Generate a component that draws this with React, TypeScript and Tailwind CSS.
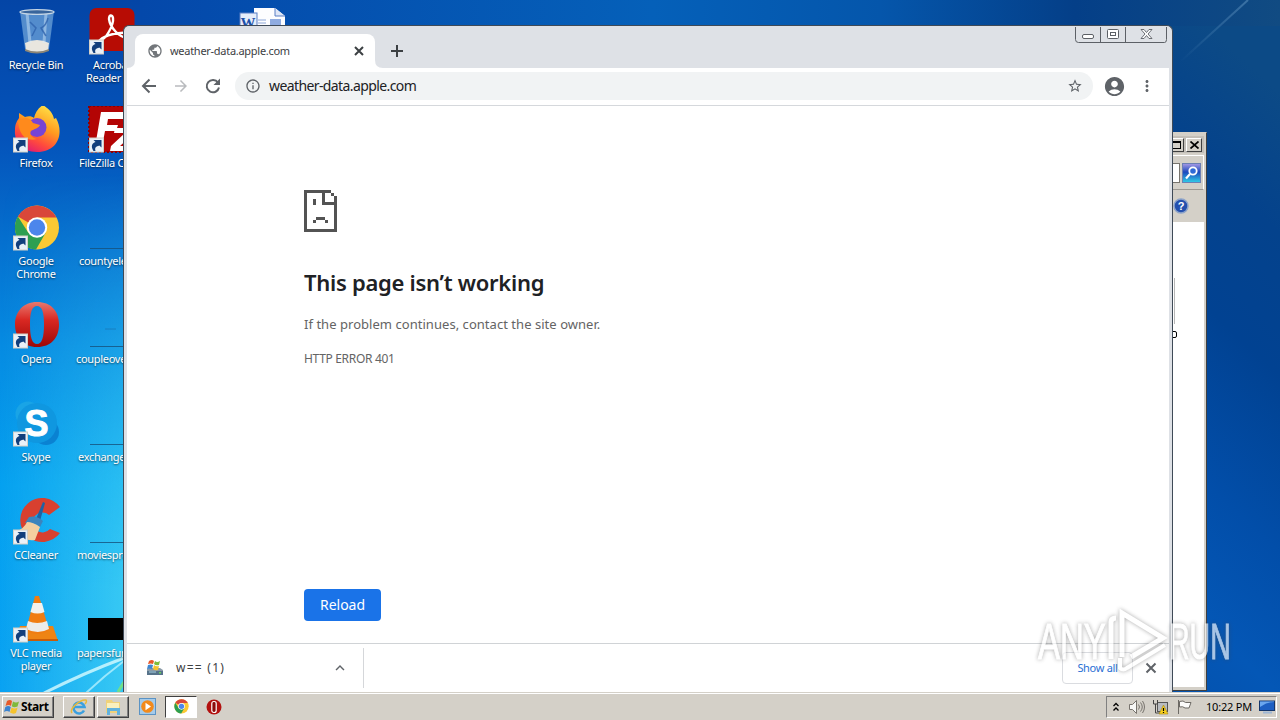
import type { FC, ReactNode } from 'react';
import {
  MdAccountCircle,
  MdArrowForward,
  MdExpandLess,
  MdInfoOutline,
  MdMoreVert,
  MdPublic,
  MdStarBorder,
} from 'react-icons/md';

interface DesktopItem {
  lines: string[];
  icon: ReactNode;
  shortcut?: boolean;
  // label alignment, centred unless given
  align?: string;
}

/* ---------- Wallpaper ---------- */

const Wallpaper: FC = () => (
  <svg className="absolute inset-0" width="1280" height="692" preserveAspectRatio="none">
    <defs>
      <linearGradient id="sky" x1="0" y1="0" x2="0" y2="1">
        <stop offset="0" stopColor="#0445a6" />
        <stop offset="0.2" stopColor="#0453ba" />
        <stop offset="0.35" stopColor="#0570cf" />
        <stop offset="0.5" stopColor="#068be2" />
        <stop offset="0.7" stopColor="#05a1f0" />
        <stop offset="1" stopColor="#0aa2f2" />
      </linearGradient>
      <linearGradient id="top" x1="0" y1="0" x2="1" y2="0">
        <stop offset="0" stopColor="#0448aa" />
        <stop offset="0.45" stopColor="#0560b9" />
        <stop offset="0.65" stopColor="#0556ab" />
        <stop offset="0.82" stopColor="#043f88" />
        <stop offset="1" stopColor="#114b82" />
      </linearGradient>
      <linearGradient id="glow" x1="0" y1="0" x2="1" y2="0">
        <stop offset="0" stopColor="#4fdcf5" stopOpacity="0" />
        <stop offset="1" stopColor="#4fdcf5" stopOpacity="0.75" />
      </linearGradient>
      <linearGradient id="glowMask" x1="0" y1="0" x2="0" y2="1">
        <stop offset="0.25" stopColor="#000" />
        <stop offset="0.85" stopColor="#fff" />
      </linearGradient>
      <mask id="fade">
        <rect width="140" height="692" fill="url(#glowMask)" />
      </mask>
      <linearGradient id="right" x1="0.6" y1="0" x2="0.35" y2="1">
        <stop offset="0" stopColor="#0c4a86" />
        <stop offset="0.2" stopColor="#04428c" />
        <stop offset="0.4" stopColor="#014292" />
        <stop offset="0.65" stopColor="#024ea9" />
        <stop offset="0.85" stopColor="#0457b6" />
        <stop offset="1" stopColor="#0452ae" />
      </linearGradient>
      <linearGradient id="ray" gradientUnits="userSpaceOnUse" x1="1180" y1="62" x2="1248" y2="0">
        <stop offset="0" stopColor="#5f93bf" stopOpacity="0" />
        <stop offset="1" stopColor="#5f93bf" stopOpacity="0.55" />
      </linearGradient>
    </defs>
    <rect width="400" height="692" fill="url(#sky)" />
    <rect width="140" height="692" fill="url(#glow)" mask="url(#fade)" />
    <rect x="140" width="1140" height="60" fill="url(#top)" />
    <rect x="1100" y="26" width="180" height="666" fill="url(#right)" />
    <path d="M1180 62L1248 0" stroke="url(#ray)" strokeWidth="2" />
    <path d="M44 693Q84 673 124 658" stroke="#d8fbff" strokeWidth="3" fill="none" opacity="0.8" />
    <path d="M86 693Q104 676 124 661" stroke="#c6f6ff" strokeWidth="2" fill="none" opacity="0.7" />
    <path d="M118 692L124 682" stroke="#6fe08c" strokeWidth="3" />
  </svg>
);

/* ---------- Desktop icons ---------- */

const RecycleBinIcon = () => (
  <>
    <path d="M8 3h34l-5 38q-12 7-24 0z" fill="#6ea3d8" opacity="0.75" />
    <path d="M13 35q12-6 24 0l-1 7q-11 5-22 0z" fill="#e9e6df" />
    <path d="M15 5l3 30M34 5l-2 30" stroke="#d6ebfb" strokeWidth="3" opacity="0.45" />
    <path d="M18 14l6 6-4 8M36 10q-2 8-7 10l5 8" stroke="#2f63ad" strokeWidth="1.500" fill="none" opacity="0.8" />
    <path d="M13 41q12 5 24 0v2q-12 5-24 0z" fill="#8b8577" />
    <ellipse cx="25" cy="4" rx="17" ry="2.400" fill="#39659c" stroke="#c5d6e6" strokeWidth="1.300" />
  </>
);

const AcrobatIcon = () => (
  <>
    <rect x="1.500" y="0" width="45" height="43" rx="7" fill="#b70c04" />
    <path
      d="M12 32c5 1 14-15 13-22-1-4-4-3-4 1 1 8 10 19 19 19 4 0 3-4-1-5-8-1-22 2-27 7z"
      fill="none"
      stroke="#fff"
      strokeWidth="2.400"
    />
  </>
);

const FirefoxIcon = () => (
  <>
    <defs>
      <linearGradient id="ff" x1="0.8" y1="0" x2="0.3" y2="1">
        <stop offset="0" stopColor="#ffe84a" />
        <stop offset="0.45" stopColor="#ff9a1f" />
        <stop offset="0.75" stopColor="#ff4a3d" />
        <stop offset="1" stopColor="#e21b72" />
      </linearGradient>
    </defs>
    <path
      d="M31-1c6 4 10 8 11 14l2-1c8 14 3 34-19 34C9 46 2 35 3 24c0-6 2-9 4-12V7l6 4c3-1 7-1 9 1 1-5 4-10 9-13z"
      fill="url(#ff)"
    />
    <circle cx="25" cy="21.500" r="9.500" fill="#7844d4" />
    <path d="M6 15c6-5 12-3 15 2l7 2c-1 3-6 4-9 6-2 3 1 7 6 8C13 36 7 28 6 15z" fill="#ff8a1c" />
  </>
);

const FileZillaIcon = () => (
  <>
    <rect x="1" y="0" width="47" height="46" fill="#b30404" stroke="#8d0000" strokeWidth="2" strokeDasharray="2 2" />
    <path d="M13 6h24l-2 7H20l-1 6h11l-2 6H17l-3 16H7zM27 22h20l-2 6-13 12h13v5H22l1-5 14-13H26z" fill="#fff" />
  </>
);

const ChromeIcon: FC = () => (
  <>
    <circle cx="25" cy="23.500" r="22" fill="#fbc934" />
    <path d="M25 23.500L5.900 12.500A22 22 0 0 1 44.500 13.500H25z" fill="#d9473a" />
    <path d="M5.900 12.500A22 22 0 0 0 24 45.500L33.500 29 25 23.500 16.500 29z" fill="#2d9f51" />
    <circle cx="25" cy="23.500" r="10.200" fill="#fff" />
    <circle cx="25" cy="23.500" r="8.200" fill="#4c86ec" />
  </>
);

const OperaIcon = () => (
  <>
    <defs>
      <linearGradient id="op" x1="0" y1="0" x2="0" y2="1">
        <stop offset="0" stopColor="#e8796f" />
        <stop offset="0.4" stopColor="#d92822" />
        <stop offset="1" stopColor="#9d0807" />
      </linearGradient>
    </defs>
    <path
      fillRule="evenodd"
      d="M25 0C11 0 3 10 3 22.500S11 45 25 45s22-9 22-22.500S39 0 25 0zm0 4c5 0 7 6 7 18.500S30 42 25 42s-7-7-7-19.500S20 4 25 4z"
      fill="url(#op)"
    />
  </>
);

const SkypeIcon = () => (
  <>
    <circle cx="16" cy="14" r="12.500" fill="#19a4e6" />
    <circle cx="34" cy="32" r="13" fill="#0a82d2" />
    <circle cx="25" cy="23" r="20" fill="#0f97e0" />
    <text x="24.500" y="35.500" textAnchor="middle" fontSize="36" fontWeight="700" fill="#fff" stroke="#fff" fontFamily="Liberation Sans, sans-serif">
      S
    </text>
  </>
);

const CCleanerIcon = () => (
  <>
    <path d="M48 9A22 22 0 1 0 48 35l-10-4A10 10 0 1 1 37 17z" fill="#d8402f" />
    <path d="M31 4l2 1-5 18-4-2z" fill="#1e62a4" />
    <path d="M17 19q8-2 14 4l-3 6q-7-5-15-4z" fill="#3c84bd" />
    <path d="M15 24q6 0 13 5l-5 13q-10 2-20-8 9-3 12-10z" fill="#f4cfa0" />
  </>
);

const VlcIcon = () => (
  <>
    <path d="M8 30h33l5 15H3z" fill="#ee8414" />
    <path d="M23 0h4l10 34q-12 8-23 0z" fill="#f07d12" />
    <path d="M21 7h9l2.500 9q-7 3-14 0z" fill="#f2f2ee" />
    <path d="M16 25q9 4 19 0l2 8q-11 6-23 0z" fill="#ececea" />
    <path d="M4 43h42v2H4z" fill="#c85c08" />
  </>
);

const WordDocIcon = () => (
  <>
    <path d="M16 0h21l10 8v40H16z" fill="#fdfdff" />
    <path d="M37 0v8h10" fill="#dfe6f6" stroke="#5b7fc4" />
    <path d="M20 12h8M20 15h8" stroke="#8ea8d8" />
    <rect x="32" y="11" width="11" height="6" fill="#8fabe0" />
    <rect x="2" y="5" width="17" height="16" fill="#e6edfa" stroke="#5b7fc4" />
    <text x="2.500" y="20" fontSize="15" fontWeight="700" fill="#1d50a8" fontFamily="Liberation Serif, serif">
      W
    </text>
  </>
);

const Thumb: FC<{ smudge?: boolean }> = ({ smudge }) => (
  <>
    <path d="M2 44.500h46" stroke="#16527d" opacity="0.8" />
    {smudge && <path d="M17 27h11" stroke="#1b5f98" opacity="0.45" />}
  </>
);

const ShortcutArrow = () => (
  <g transform="translate(1 31.500)">
    <rect x="0.500" y="0.500" width="14" height="14" fill="#e9f1f8" stroke="#d4cfc6" />
    <path d="M4.500 13.500C1.500 9 3 5.500 6.500 4.500L4.500 2.500H12.500V10L10.300 8C7 9 5.500 10 6.500 13.500z" fill="#123f7c" />
  </g>
);

const DesktopIcon: FC<{ item: DesktopItem }> = ({ item }) => (
  <div className="h-[98px] pt-2 flex flex-col items-center">
    <svg width="48" height="48" viewBox="0 0 48 48" className="shrink-0">
      {item.icon}
      {item.shortcut && <ShortcutArrow />}
    </svg>
    <div
      className={`mt-[2px] w-full whitespace-nowrap text-[11px] leading-[13px] tracking-[-0.3px] text-white [text-shadow:0_1px_2px_rgba(0,0,0,0.6)] ${
        item.align ?? 'text-center'
      }`}
    >
      {item.lines.map((line) => (
        <div key={line}>{line}</div>
      ))}
    </div>
  </div>
);

const firstColumn: DesktopItem[] = [
  { lines: ['Recycle Bin'], icon: <RecycleBinIcon /> },
  { lines: ['Firefox'], icon: <FirefoxIcon />, shortcut: true },
  { lines: ['Google', 'Chrome'], icon: <ChromeIcon />, shortcut: true },
  { lines: ['Opera'], icon: <OperaIcon />, shortcut: true },
  { lines: ['Skype'], icon: <SkypeIcon />, shortcut: true },
  { lines: ['CCleaner'], icon: <CCleanerIcon />, shortcut: true },
  { lines: ['VLC media', 'player'], icon: <VlcIcon />, shortcut: true },
];

const secondColumn: DesktopItem[] = [
  { lines: ['Acrobat', 'Reader DC'], icon: <AcrobatIcon />, shortcut: true },
  { lines: ['FileZilla C'], icon: <FileZillaIcon />, shortcut: true, align: 'pl-[7px]' },
  { lines: ['countyele'], icon: <Thumb />, align: 'pl-[7px]' },
  { lines: ['coupleove'], icon: <Thumb smudge />, align: 'pl-1' },
  { lines: ['exchange'], icon: <Thumb />, align: 'pl-1.5' },
  { lines: ['moviespro'], icon: <Thumb />, align: 'pl-[5px]' },
  { lines: ['papersfun'], icon: <rect y="22" width="48" height="22" fill="#000" />, align: 'pl-[5px]' },
];

/* ---------- Explorer window, mostly hidden by the browser ---------- */

const ExplorerWindow: FC = () => (
  <div className="absolute left-[1100px] top-[132px] flex h-[559px] w-[107px] flex-col border border-t-[#d4d0c8] border-l-[#d4d0c8] border-r-[#404040] border-b-[#404040] bg-[#d4d0c8] p-[2px] pt-[3px]">
    <div className="flex h-[17px] items-center justify-end gap-[2px] bg-[#c3bfb8] pr-[2px]">
      <div className="flex h-[14px] w-4 items-center justify-center border border-t-white border-l-white border-r-[#404040] border-b-[#404040] bg-[#d4d0c8]">
        <div className="h-2 w-[9px] border border-t-2 border-black" />
      </div>
      <div className="flex h-[14px] w-4 items-center justify-center border border-t-white border-l-white border-r-[#404040] border-b-[#404040] bg-[#d4d0c8]">
        <svg width="9" height="8" viewBox="0 0 9 8" stroke="#000" strokeWidth="1.700">
          <path d="M0.500 0.500l8 7M8.500 0.500l-8 7" />
        </svg>
      </div>
    </div>
    <div className="mt-0.5 flex h-[35px] items-center justify-end gap-[2px] border border-t-white border-r-white border-b-[#9d9992] border-l-[#9d9992] pr-[2px]">
      <div className="h-5 w-20 border border-[#77746d] bg-white" />
      <svg width="20" height="20" viewBox="0 0 19 20">
        <defs>
          <linearGradient id="find" x1="0" y1="0" x2="0" y2="1">
            <stop offset="0" stopColor="#a99be6" />
            <stop offset="0.45" stopColor="#1c49bd" />
            <stop offset="1" stopColor="#31cfe8" />
          </linearGradient>
        </defs>
        <rect x="0.500" y="0.500" width="18" height="19" fill="url(#find)" stroke="#6c7fb4" />
        <circle cx="11" cy="8" r="3.700" fill="#2f6ad6" stroke="#fff" strokeWidth="1.800" />
        <path d="M8 11l-4 4.500" stroke="#fff" strokeWidth="2.200" />
      </svg>
    </div>
    <div className="flex h-8 items-center justify-end pr-[15px]">
      <svg width="16" height="16" viewBox="0 0 16 16">
        <circle cx="8" cy="8" r="7" fill="#2450ae" stroke="#8da3c9" strokeWidth="1.500" />
        <text x="8" y="12" textAnchor="middle" fontSize="11" fontWeight="700" fill="#fff" fontFamily="Liberation Sans, sans-serif">
          ?
        </text>
      </svg>
    </div>
    <div className="flex-1 bg-white pt-[56px]">
      <div className="ml-[71px] h-[46px] w-px bg-[#b8b8b8]" />
      <div className="ml-[67px] mt-[7px] h-[7px] w-[7px] rounded-[2px] border border-black" />
    </div>
    <div className="h-px bg-[#d4d0c8]" />
  </div>
);

/* ---------- Browser window ---------- */

const LineIcon: FC<{ d: string; className: string }> = ({ d, className }) => (
  <svg width="18" height="18" viewBox="0 0 18 18" fill="none" stroke="currentColor" strokeWidth="2" className={className}>
    <path d={d} />
  </svg>
);

const closePath = 'M4.500 4.500l9 9M13.500 4.500l-9 9';

const CaptionButtons: FC = () => (
  <svg width="94" height="18" viewBox="0 0 94 18" fill="none" stroke="#5c6066" className="mr-px">
    <g transform="translate(0 -0.500)">
      <path d="M1.500 0v13q0 3 3 3h86q2 0 2-3V0M26.500 0v16M51.500 0v16" />
      <rect x="8.500" y="8" width="11" height="4" rx="1.500" fill="#fff" />
      <rect x="33.500" y="3" width="11" height="9" rx="1" fill="#fff" />
      <rect x="36.500" y="6" width="5" height="3" />
      <path
        d="M67 3h3l2.500 3 2.500-3h3l-4 4.500 4 4.500h-3l-2.500-3-2.500 3h-3l4-4.500z"
        fill="#fff"
        strokeWidth="0.900"
      />
    </g>
  </svg>
);

const TabStrip: FC = () => (
  <div className="flex h-[41px] items-start justify-between bg-[#dee1e6]">
    <div className="flex h-full items-end">
      <svg width="8" height="8" className="text-white">
        <path d="M8 0v8H0q8 0 8-8z" fill="currentColor" />
      </svg>
      <div className="flex h-[34px] w-[240px] items-center rounded-t-lg bg-white pl-3 pr-[7px]">
        <MdPublic className="h-4 w-4 text-[#72767a]" />
        <span className="ml-[7px] text-[11px] tracking-[-0.28px] text-[#3c4043]">weather-data.apple.com</span>
        <LineIcon d="M5 5l8 8M13 5l-8 8" className="ml-auto text-[#3c4043]" />
      </div>
      <svg width="8" height="8" className="text-white">
        <path d="M0 0v8h8q-8 0-8-8z" fill="currentColor" />
      </svg>
      <LineIcon d="M9 3v12M3 9h12" className="mb-2 ml-[5px] text-[#3c4043]" />
    </div>
    <CaptionButtons />
  </div>
);

const Toolbar: FC = () => (
  <div className="flex h-[38px] items-center border-b border-[#d5d8dc] bg-white pb-px pl-[13px] text-[#5f6368]">
    <LineIcon d="M16 9H3.500M9.500 2.500L3 9l6.500 6.500" className="" />
    <MdArrowForward className="ml-[14px] h-[18px] w-[18px] text-[#b9bbbe]" />
    <svg width="20" height="20" viewBox="0 0 20 20" className="ml-[13px]">
      <path d="M15 6.500A6.200 6.200 0 1 0 16 11.500" fill="none" stroke="currentColor" strokeWidth="2" />
      <path d="M17 2.500v6.500h-6.500z" fill="currentColor" />
    </svg>
    <div className="ml-[12px] flex h-7 w-[858px] items-center rounded-full bg-[#f1f3f4] pl-[10px] pr-[10px]">
      <MdInfoOutline className="h-4 w-4" />
      <span className="ml-2 pb-px text-[14px] tracking-[-0.6px] text-[#202124]">weather-data.apple.com</span>
      <MdStarBorder className="ml-auto h-4 w-4" />
    </div>
    <MdAccountCircle className="ml-[10px] h-[23px] w-[23px]" />
    <MdMoreVert className="ml-[12px] h-[18px] w-[18px]" />
  </div>
);

// 11x14 grid, every cell drawn three pixels wide
const SadPage: FC = () => (
  <svg width="33" height="42" viewBox="0 0 11 14" shapeRendering="crispEdges" fill="#535353">
    <path d="M0 0h9v1H7v3h4v1H6V1H1v12h9V5h1v9H0z" />
    <path d="M9 1h1v1H9zM10 2h1v3h-1zM3 3h1v2H3zM4 9h3v1H4zM3 10h1v1H3zM7 10h1v1H7z" />
  </svg>
);

const ErrorPage: FC = () => (
  <div className="flex flex-1 flex-col items-start pl-[177px] pt-[84px]">
    <SadPage />
    <h1 className="mt-[34px] text-[22px] font-semibold leading-8 tracking-[-0.28px] text-[#202124]">
      This page isn’t working
    </h1>
    <p className="mt-4 text-[13px] leading-5 tracking-[0.04px] text-[#646464]">
      If the problem continues, contact the site owner.
    </p>
    <p className="mt-[15px] text-[12px] leading-5 tracking-[-0.32px] text-[#646464]">HTTP ERROR 401</p>
    <button className="mt-[220px] h-8 w-[77px] rounded bg-[#1a73e8] pb-0.5 text-[14px] text-white">Reload</button>
  </div>
);

const InstallerIcon: FC = () => (
  <svg width="18" height="18" viewBox="0 0 18 18" className="ml-px">
    <path d="M1 10l2-1h11l3 2v5H1z" fill="#8b9ba8" />
    <path d="M1 12h16v4H1z" fill="#57738a" />
    <path d="M3 13h7" stroke="#a9d3e3" />
    <rect x="13" y="13" width="2" height="1.500" fill="#6cd35b" />
    <path d="M3 2q3-2 5 0L7 5Q5 4 2 5z" fill="#e8572a" />
    <path d="M9 2q2 2 5 0l-1 4Q10 7 8 5z" fill="#7ebc3c" />
    <path d="M2 6q3-1 5 0l-1 4q-2-1-5 0z" fill="#3e86d0" />
    <path d="M8 6q2 2 5 1l-1 4q-3 1-5-1z" fill="#f6c22e" />
  </svg>
);

const DownloadBar: FC = () => (
  <div className="flex h-[49px] items-center border-t border-[#d0d3d6] bg-white">
    <div className="flex h-10 w-[237px] items-center border-r border-[#d5d7da] pl-[18px]">
      <InstallerIcon />
      <span className="ml-3 text-[12px] tracking-[1.25px] text-[#3c4043]">w== (1)</span>
      <MdExpandLess className="ml-auto mr-[14px] h-[18px] w-[18px] text-[#5f6368]" />
    </div>
    <div className="ml-auto flex items-center">
      <button className="h-8 w-[71px] rounded border border-[#dadce0] text-[11px] tracking-[-0.3px] text-[#2a6fd4]">
        Show all
      </button>
      <LineIcon d={closePath} className="ml-[9px] mr-[9px] text-[#5f6368]" />
    </div>
  </div>
);

const BrowserWindow: FC = () => (
  <div className="absolute left-[123px] top-[25px] flex h-[667px] w-[1050px] flex-col overflow-hidden rounded-t-md border border-b-0 border-[#3f4a57] bg-[#dee1e6] px-[3px] pt-px">
    <TabStrip />
    <div className="flex flex-1 flex-col bg-white">
      <Toolbar />
      <ErrorPage />
      <DownloadBar />
    </div>
  </div>
);

const Watermark: FC = () => (
  <svg
    className="absolute left-[1030px] top-[602px] drop-shadow-[0_0_2px_rgba(70,70,70,0.7)]"
    width="210"
    height="76"
    fill="#fff"
    stroke="#fff"
    fontFamily="Liberation Sans, sans-serif"
    fontSize="50"
    opacity="0.66"
  >
    <g transform="translate(8 57) scale(0.66 1)">
      <text>ANY</text>
    </g>
    <path d="M81 57V20q0-4 5-4M92 55V11l41 25-32 19" fill="none" strokeWidth="5" />
    <path d="M90 56v10q3 3 7 0l38-23" fill="none" strokeWidth="4" />
    <g transform="translate(139 57) scale(0.57 1)">
      <text>RUN</text>
    </g>
  </svg>
);

/* ---------- Taskbar ---------- */

const WindowsFlag: FC = () => (
  <svg width="16" height="16" viewBox="0 0 16 16">
    <path d="M3 2q3-2 5 0L7 7Q5 5 1.500 7z" fill="#e65a28" />
    <path d="M9 2.500q3 2 6 0L13.500 7.500Q10 9 7.800 7.300z" fill="#7fb93c" />
    <path d="M1.300 8q3-2 5.500 0L5.500 13Q3 11 0 13z" fill="#3b83cf" />
    <path d="M7.600 8.500q3 2 6 0L12 14q-3 1.500-6-.500z" fill="#f5c32d" />
  </svg>
);

const TaskButton: FC<{ children: ReactNode }> = ({ children }) => (
  <div className="flex h-[22px] w-8 items-center justify-center border border-t-white border-l-white border-r-[#404040] border-b-[#404040] shadow-[inset_-1px_-1px_0_#808080]">
    {children}
  </div>
);

const Taskbar: FC = () => (
  <div className="flex h-7 items-center border-t border-[#d4d0c8] bg-[#d4d0c8] pl-[2px] pr-[3px] shadow-[inset_0_1px_0_#fff]">
    <div className="flex h-[22px] w-[52px] items-center gap-px border border-t-white border-l-white border-r-[#404040] border-b-[#404040] pl-px text-[12px] font-bold tracking-[-0.4px] text-black shadow-[inset_-1px_-1px_0_#808080]">
      <WindowsFlag />
      Start
    </div>
    <div className="ml-[9px] flex items-center gap-[2px]">
      <TaskButton>
        <svg width="18" height="18" viewBox="0 0 18 18" fill="none">
          <path d="M14 12.500A5.500 5.500 0 1 1 14.500 9H5" stroke="#3ba0df" strokeWidth="2.600" />
          <path d="M2 15C-1 11 10 1 16 2c1 1 0 3-1 4" stroke="#e8b93a" strokeWidth="1.500" />
        </svg>
      </TaskButton>
      <TaskButton>
        <svg width="18" height="18" viewBox="0 0 18 18">
          <path d="M2 2h6l1 2h7v11H2z" fill="#f0d27a" />
          <path d="M3 5h12v5H3z" fill="#faf0bd" />
          <path d="M3 10h13v7h-3v-4H6v4H3z" fill="#62b2dd" />
        </svg>
      </TaskButton>
    </div>
    <svg width="17" height="17" viewBox="0 0 17 17" className="ml-[10px]">
      <rect x="0.500" y="0.500" width="16" height="16" fill="#a5cbea" stroke="#5b93c4" />
      <circle cx="8.500" cy="8.500" r="6.300" fill="#f28a1c" />
      <path d="M6.500 4.700l5.500 3.800-5.500 3.800z" fill="#fff" />
    </svg>
    <div className="ml-[9px] flex h-[22px] w-8 items-center justify-center border border-t-[#404040] border-l-[#404040] border-r-white border-b-white bg-white">
      <svg width="15" height="15" viewBox="2 1 46 46">
        <ChromeIcon />
      </svg>
    </div>
    <svg width="16" height="16" viewBox="0 0 16 16" className="ml-[9px]">
      <circle cx="8" cy="8" r="7.500" fill="#b3110f" />
      <rect x="5.800" y="2.500" width="4.400" height="11" rx="2" fill="#8a0b0a" stroke="#fff" strokeWidth="1.200" />
    </svg>
    <div className="ml-auto flex h-[22px] w-[171px] items-center border border-t-[#808080] border-l-[#808080] border-r-white border-b-white pl-1.5">
      <svg width="6" height="10" viewBox="0 0 6 10" fill="none" stroke="#000" strokeWidth="1.300">
        <path d="M0.500 4L3 1.500 5.500 4M0.500 8.500L3 6l2.500 2.500" />
      </svg>
      <svg width="17" height="16" viewBox="0 0 17 16" fill="none" stroke="#77736d" className="ml-[9px]">
        <path d="M1.500 5.500h3l4-4v13l-4-4h-3z" fill="#f7f7f5" />
        <path d="M10.500 5.500q2 2.500 0 5M12.500 3.500q3.500 4.500 0 9M14.500 2q4 6 0 12" />
      </svg>
      <svg width="17" height="16" viewBox="0 0 17 16" className="ml-[7px]">
        <rect x="5.500" y="3.500" width="10" height="9" fill="#b9bcc0" stroke="#555" />
        <path d="M1.500 1v4h4V1M3.500 5v9h5" fill="none" stroke="#444" />
        <path d="M11.500 6l4.500 9H7z" fill="#f7cf1d" stroke="#a68410" strokeWidth="0.600" />
        <path d="M11.500 9v3M11.500 13v1" stroke="#000" strokeWidth="1.200" />
      </svg>
      <svg width="17" height="16" viewBox="0 0 17 16" className="ml-[7px]" stroke="#6d6a65" fill="#fbfbfa">
        <path d="M2.500 1v14" />
        <path d="M3.500 2.500q4-1.500 6 1l5.500 0-2 5.500H9q-2-2-5.500-1z" />
      </svg>
      <span className="ml-[13px] mt-px whitespace-nowrap text-[11px] tracking-[-0.2px] text-black">10:22 PM</span>
      <svg width="16" height="14" viewBox="0 0 16 14" className="ml-auto mr-px">
        <rect x="0.500" y="1" width="15" height="9.500" fill="#1d5fc2" stroke="#14366b" />
        <path d="M1 7q7-5 14-5v-.5H1z" fill="#6aa6ee" />
        <path d="M4 12.500h9" stroke="#9fb7d4" strokeWidth="2" />
      </svg>
    </div>
  </div>
);

const App: FC = () => (
  <div className="flex h-[720px] w-[1280px] flex-col overflow-hidden font-['Noto_Sans',sans-serif]">
    <div className="relative h-[692px] overflow-hidden">
      <Wallpaper />
      <div className="relative flex">
        <div className="w-[72px]">
          {firstColumn.map((item) => (
            <DesktopIcon key={item.lines[0]} item={item} />
          ))}
        </div>
        <div className="w-20">
          {secondColumn.map((item) => (
            <DesktopIcon key={item.lines[0]} item={item} />
          ))}
        </div>
        <div className="ml-[70px] w-20">
          <DesktopIcon item={{ lines: [], icon: <WordDocIcon /> }} />
        </div>
      </div>
      <ExplorerWindow />
      <BrowserWindow />
      <Watermark />
    </div>
    <Taskbar />
  </div>
);

export default App;
